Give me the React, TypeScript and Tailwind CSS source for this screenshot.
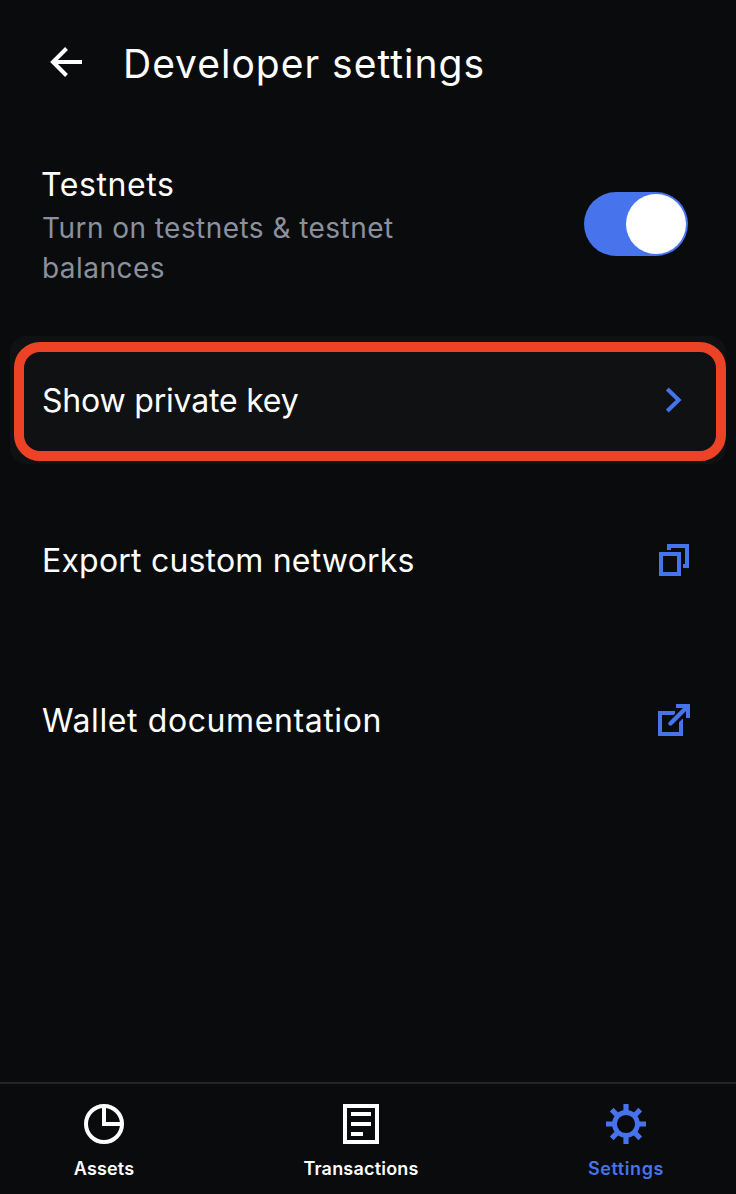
import type { ReactNode } from "react";

function BackArrow() {
  return (
    <svg width="40" height="40" viewBox="0 0 40 40" fill="none" stroke="currentColor" strokeWidth="4">
      <path d="M36 20H8M20.5 6.5L7 20L20.5 33.5" />
    </svg>
  );
}

function Chevron() {
  return (
    <svg width="32" height="32" viewBox="0 0 32 32" fill="none" stroke="currentColor" strokeWidth="4">
      <path d="M9.3 5L20.7 16L9.3 27" />
    </svg>
  );
}

function CopyIcon() {
  return (
    <svg width="32" height="32" viewBox="0 0 32 32" fill="none" stroke="currentColor" strokeWidth="4">
      <path d="M3 10H21V30H3Z" />
      <path d="M11 6V2H29V22H25" />
    </svg>
  );
}

function ExternalIcon() {
  return (
    <svg width="32" height="32" viewBox="0 0 32 32" fill="none" stroke="currentColor" strokeWidth="4">
      <path d="M17 9H2V30H23V15" />
      <path d="M9 24L31 2" stroke="#0a0b0d" strokeWidth="9" />
      <path d="M12.5 19.5L29 3" strokeLinecap="round" strokeWidth="4.4" />
      <path d="M18 2H30V14" />
    </svg>
  );
}

function PieIcon() {
  return (
    <svg width="40" height="40" viewBox="0 0 40 40" fill="none" stroke="currentColor" strokeWidth="4">
      <circle cx="20" cy="20" r="18" />
      <path d="M20 2V20H38" />
    </svg>
  );
}

function ListIcon() {
  return (
    <svg width="40" height="40" viewBox="0 0 40 40" fill="none" stroke="currentColor" strokeWidth="4">
      <path d="M4 2H36V38H4ZM10 10H30M10 20H30M10 30H22" />
    </svg>
  );
}

function GearIcon() {
  return (
    <svg width="40" height="40" viewBox="0 0 40 40" fill="none" stroke="currentColor">
      <circle cx="20" cy="20" r="11.5" strokeWidth="4.8" />
      <path
        d="M20 0V8M20 32V40M0 20H8M32 20H40M5.7 5.7L11.5 11.5M28.5 28.5L34.3 34.3M5.7 34.3L11.5 28.5M28.5 11.5L34.3 5.7"
        strokeWidth="5.2"
      />
    </svg>
  );
}

function Row({ label, children }: { label: ReactNode; children: ReactNode }) {
  return (
    <button className="flex h-40 w-full items-center justify-between pr-[46px] pl-[42px] text-left">
      {label}
      <span className="text-[#4773ed]">{children}</span>
    </button>
  );
}

export default function App() {
  return (
    <div className="flex h-[1194px] w-[736px] flex-col overflow-hidden bg-[#0a0b0d] font-['Inter',sans-serif] text-white">
      <header className="flex h-[124px] items-center pl-[46px]">
        <BackArrow />
        <h1 className="ml-[37px] pt-[3px] text-[39px] leading-[48px] tracking-[1px] whitespace-nowrap">Developer settings</h1>
      </header>
      <main className="flex-1">
        <section className="flex h-[196px] items-center justify-between pr-12 pl-[41px]">
          <div className="pt-[7px]">
            <h2 className="pb-px text-[32px] leading-[44px] tracking-[0.6px]">Testnets</h2>
            <p className="w-[400px] pl-px text-[28px] leading-10 tracking-[0.45px] text-[#8a919e]">
              Turn on testnets &amp; testnet
              <br />
              balances
            </p>
          </div>
          <button role="switch" aria-checked="true" aria-label="Testnets" className="mt-1 flex h-16 w-[104px] items-center justify-end rounded-full bg-[#4773ed] p-0.5">
            <span className="size-[60px] rounded-full bg-white" />
          </button>
        </section>
        <div className="relative px-[10px] py-4">
          <button className="flex h-32 w-full items-center justify-between rounded-2xl bg-[#101113] pr-9 pl-8 text-left">
            <span className="pt-0.5 text-[32px] tracking-[-0.2px]">Show private key</span>
            <span className="text-[#4773ed]"><Chevron /></span>
          </button>
          <div className="pointer-events-none absolute top-[22px] left-[14px] h-[119px] w-[712px] rounded-[26px] border-10 border-[#ec4226]" />
        </div>
        <Row label={<span className="pt-0.5 text-[32px] tracking-[0.2px]">Export custom networks</span>}>
          <CopyIcon />
        </Row>
        <Row label={<span className="pt-0.5 text-[32px] tracking-[0.6px]">Wallet documentation</span>}>
          <ExternalIcon />
        </Row>
      </main>
      <nav className="flex h-28 items-start border-t-2 border-[#242527] pt-5 pl-11 text-[18px] leading-6 font-semibold">
        <a className="flex w-[120px] flex-col items-center gap-[13px]">
          <PieIcon />
          <span className="tracking-[0.15px]">Assets</span>
        </a>
        <a className="ml-[137px] flex w-[120px] flex-col items-center gap-[13px]">
          <ListIcon />
          <span className="tracking-[0.2px]">Transactions</span>
        </a>
        <a className="ml-[145px] flex w-[120px] flex-col items-center gap-[13px] text-[#4773ed]">
          <GearIcon />
          <span className="tracking-[0.6px]">Settings</span>
        </a>
      </nav>
    </div>
  );
}
